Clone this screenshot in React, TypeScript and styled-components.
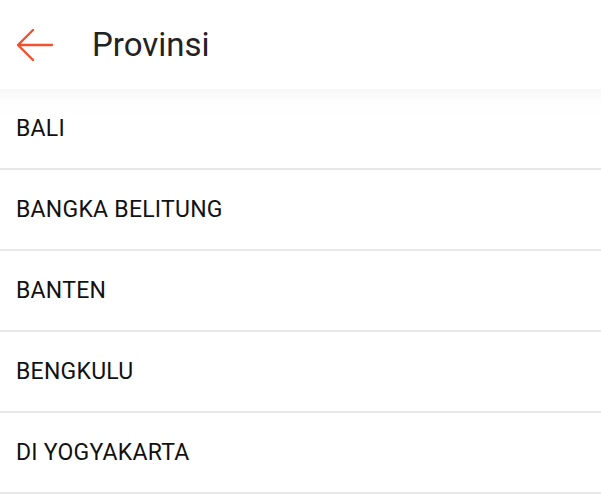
import React from "react";
import styled, { createGlobalStyle } from "styled-components";

const Global = createGlobalStyle`
  html, body { margin: 0; padding: 0; background: #ffffff; }
  body { font-family: Roboto, "Noto Sans", sans-serif; }
`;

const Page = styled.div`
  width: 601px;
  height: 495px;
  overflow: hidden;
  background: #ffffff;
  display: flex;
  flex-direction: column;
`;

const Header = styled.header`
  height: 89px;
  display: flex;
  align-items: center;
  padding-left: 17px;
  gap: 39px;
  background: #ffffff;
  flex-shrink: 0;
`;

const BackButton = styled.button`
  border: none;
  background: transparent;
  padding: 0;
  width: 36px;
  height: 34px;
  display: flex;
  align-items: center;
  justify-content: center;
  cursor: pointer;
`;

const Title = styled.h1`
  margin: 0;
  font-family: Roboto, sans-serif;
  font-weight: 400;
  font-size: 33px;
  color: #222222;
  line-height: 1;
`;

const List = styled.ul`
  list-style: none;
  margin: 0;
  padding: 0;
  background: linear-gradient(to bottom, #f8f8f8 0px, #fdfdfd 10px, #ffffff 30px);
`;

const Row = styled.li`
  height: 79px;
  display: flex;
  align-items: center;
  padding-left: 16px;
  border-bottom: 2px solid #e8e8e8;
  font-family: Roboto, sans-serif;
  font-size: 23px;
  letter-spacing: 0.25px;
  color: #111111;
`;

const provinces = ["BALI", "BANGKA BELITUNG", "BANTEN", "BENGKULU", "DI YOGYAKARTA"];

export default function App() {
  return (
    <Page>
      <Global />
      <Header>
        <BackButton aria-label="Kembali">
          <svg width="36" height="32" viewBox="0 0 36 32" fill="none">
            <path d="M35 16H2M16 1L1 16l15 15" stroke="#f0512f" strokeWidth="2.4" strokeLinecap="round" strokeLinejoin="round" />
          </svg>
        </BackButton>
        <Title>Provinsi</Title>
      </Header>
      <List>
        {provinces.map((p) => (
          <Row key={p}>{p}</Row>
        ))}
      </List>
    </Page>
  );
}
